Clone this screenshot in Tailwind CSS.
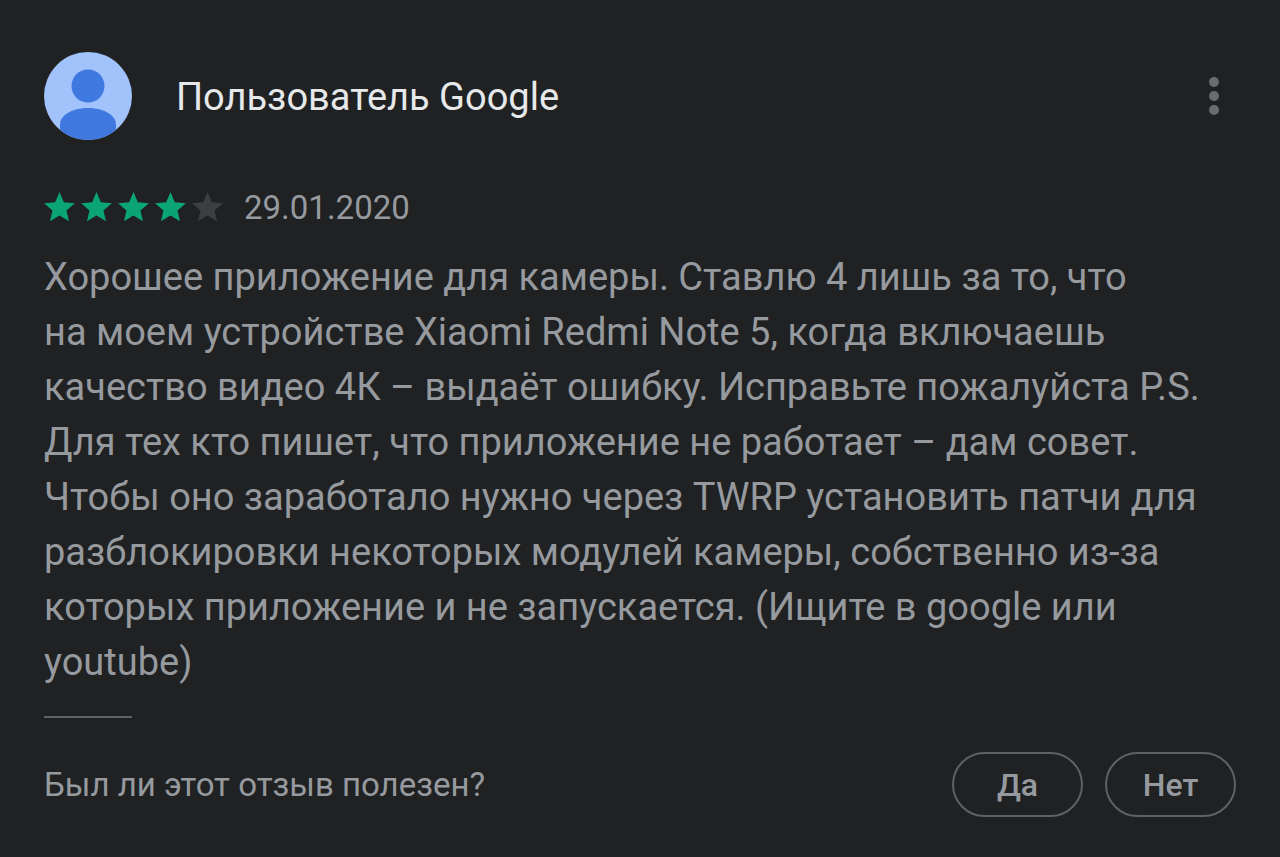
<!DOCTYPE html>
<html lang="ru">
  <head>
    <meta charset="UTF-8" />
    <meta name="viewport" content="width=device-width, initial-scale=1.0" />
    <title>Отзыв</title>
    <script src="https://cdn.jsdelivr.net/npm/@tailwindcss/browser@4"></script>
  </head>
  <body class="min-h-screen bg-[#1f2123] font-[Roboto,sans-serif] text-[#969a9e]">
    <article class="px-11 pt-[52px] pb-10">
      <!-- Author -->
      <header class="flex items-center">
        <svg class="size-[88px] shrink-0" viewBox="0 0 88 88" aria-hidden="true">
          <clipPath id="avatar"><circle cx="44" cy="44" r="44" /></clipPath>
          <g clip-path="url(#avatar)">
            <rect width="88" height="88" fill="#a1c2fa" />
            <circle cx="44" cy="34" r="16.500" fill="#3f79e0" />
            <path d="M16 88V73C16 62 30 56 44 56s28 6 28 17v15z" fill="#3f79e0" />
          </g>
        </svg>
        <h1 class="ml-11 pt-0.5 text-[38px] leading-[48px] text-[#e6e8ea]">Пользователь Google</h1>
        <button type="button" aria-label="Ещё" class="ml-auto flex w-11 justify-center">
          <svg class="h-10 w-[10px]" viewBox="0 0 10 40" fill="#6a6c6e">
            <circle cx="5" cy="6" r="5" />
            <circle cx="5" cy="20" r="5" />
            <circle cx="5" cy="34" r="5" />
          </svg>
        </button>
      </header>

      <!-- Rating -->
      <div class="mt-11 flex items-center">
        <svg class="h-8 w-[180px]" viewBox="0 0 180 32" role="img" aria-label="4 из 5">
          <defs>
            <path id="star" transform="translate(-3 -3) scale(1.54)" d="M12 17.270L18.180 21l-1.640-7.030L22 9.240l-7.190-.610L12 2 9.190 8.630 2 9.240l5.460 4.730L5.820 21z" />
          </defs>
          <g fill="#0aa573">
            <use href="#star" />
            <use href="#star" x="37" />
            <use href="#star" x="74" />
            <use href="#star" x="111" />
          </g>
          <use href="#star" x="148" fill="#3c3f42" />
        </svg>
        <time datetime="2020-01-29" class="ml-5 text-[33px] leading-[48px]">29.01.2020</time>
      </div>

      <p class="mt-[18px] text-[38px] leading-[55px]">
        Хорошее приложение для камеры. Ставлю 4 лишь за то, что на&nbsp;моем устройстве Xiaomi Redmi Note 5, когда включаешь качество видео 4К – выдаёт ошибку. Исправьте пожалуйста P.S. Для тех кто пишет, что приложение не работает – дам совет. Чтобы оно заработало нужно через TWRP установить патчи для разблокировки некоторых модулей камеры, собственно из-за которых приложение и не запускается. (Ищите в google или youtube)
      </p>

      <hr class="mt-[26px] w-[88px] border-t-2 border-[#5f6163]" />

      <!-- Feedback -->
      <footer class="mt-[34px] flex items-center gap-[22px]">
        <span class="mr-auto text-[33px]">Был ли этот отзыв полезен?</span>
        <button type="button" class="h-[65px] w-[131px] rounded-full border-2 border-[#5f6163] text-[32px] font-medium">Да</button>
        <button type="button" class="h-[65px] w-[131px] rounded-full border-2 border-[#5f6163] text-[32px] font-medium">Нет</button>
      </footer>
    </article>
  </body>
</html>
